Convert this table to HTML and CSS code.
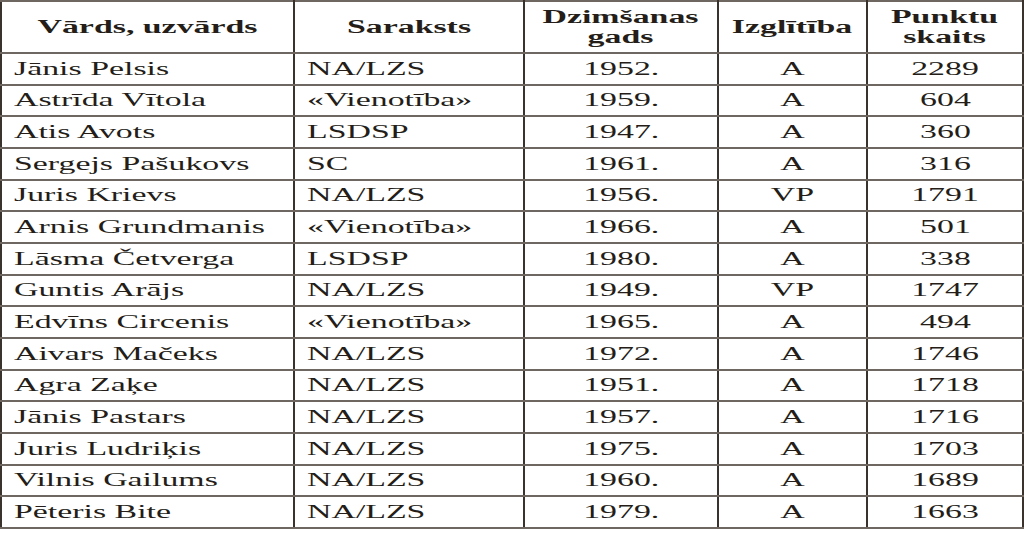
FILE: index.html
```html
<!DOCTYPE html>
<html lang="lv">
<head>
<meta charset="utf-8">
<title>Kandidāti</title>
<link rel="stylesheet" href="styles.css">
</head>
<body>
<table class="results">
  <colgroup>
    <col class="c-name"><col class="c-list"><col class="c-year"><col class="c-edu"><col class="c-pts">
  </colgroup>
  <thead>
    <tr>
      <th><span class="t">Vārds, uzvārds</span></th>
      <th><span class="t">Saraksts</span></th>
      <th><span class="t">Dzimšanas<br>gads</span></th>
      <th><span class="t">Izglītība</span></th>
      <th><span class="t">Punktu<br>skaits</span></th>
    </tr>
  </thead>
  <tbody>
    <tr><td class="l"><span class="t">Jānis Pelsis</span></td><td class="l"><span class="t">NA/LZS</span></td><td><span class="t">1952.</span></td><td><span class="t">A</span></td><td><span class="t">2289</span></td></tr>
    <tr><td class="l"><span class="t">Astrīda Vītola</span></td><td class="l"><span class="t">«Vienotība»</span></td><td><span class="t">1959.</span></td><td><span class="t">A</span></td><td><span class="t">604</span></td></tr>
    <tr><td class="l"><span class="t">Atis Avots</span></td><td class="l"><span class="t">LSDSP</span></td><td><span class="t">1947.</span></td><td><span class="t">A</span></td><td><span class="t">360</span></td></tr>
    <tr><td class="l"><span class="t">Sergejs Pašukovs</span></td><td class="l"><span class="t">SC</span></td><td><span class="t">1961.</span></td><td><span class="t">A</span></td><td><span class="t">316</span></td></tr>
    <tr><td class="l"><span class="t">Juris Krievs</span></td><td class="l"><span class="t">NA/LZS</span></td><td><span class="t">1956.</span></td><td><span class="t">VP</span></td><td><span class="t">1791</span></td></tr>
    <tr><td class="l"><span class="t">Arnis Grundmanis</span></td><td class="l"><span class="t">«Vienotība»</span></td><td><span class="t">1966.</span></td><td><span class="t">A</span></td><td><span class="t">501</span></td></tr>
    <tr><td class="l"><span class="t">Lāsma Četverga</span></td><td class="l"><span class="t">LSDSP</span></td><td><span class="t">1980.</span></td><td><span class="t">A</span></td><td><span class="t">338</span></td></tr>
    <tr><td class="l"><span class="t">Guntis Arājs</span></td><td class="l"><span class="t">NA/LZS</span></td><td><span class="t">1949.</span></td><td><span class="t">VP</span></td><td><span class="t">1747</span></td></tr>
    <tr><td class="l"><span class="t">Edvīns Circenis</span></td><td class="l"><span class="t">«Vienotība»</span></td><td><span class="t">1965.</span></td><td><span class="t">A</span></td><td><span class="t">494</span></td></tr>
    <tr><td class="l"><span class="t">Aivars Mačeks</span></td><td class="l"><span class="t">NA/LZS</span></td><td><span class="t">1972.</span></td><td><span class="t">A</span></td><td><span class="t">1746</span></td></tr>
    <tr><td class="l"><span class="t">Agra Zaķe</span></td><td class="l"><span class="t">NA/LZS</span></td><td><span class="t">1951.</span></td><td><span class="t">A</span></td><td><span class="t">1718</span></td></tr>
    <tr><td class="l"><span class="t">Jānis Pastars</span></td><td class="l"><span class="t">NA/LZS</span></td><td><span class="t">1957.</span></td><td><span class="t">A</span></td><td><span class="t">1716</span></td></tr>
    <tr><td class="l"><span class="t">Juris Ludriķis</span></td><td class="l"><span class="t">NA/LZS</span></td><td><span class="t">1975.</span></td><td><span class="t">A</span></td><td><span class="t">1703</span></td></tr>
    <tr><td class="l"><span class="t">Vilnis Gailums</span></td><td class="l"><span class="t">NA/LZS</span></td><td><span class="t">1960.</span></td><td><span class="t">A</span></td><td><span class="t">1689</span></td></tr>
    <tr><td class="l"><span class="t">Pēteris Bite</span></td><td class="l"><span class="t">NA/LZS</span></td><td><span class="t">1979.</span></td><td><span class="t">A</span></td><td><span class="t">1663</span></td></tr>
  </tbody>
</table>
</body>
</html>
```

FILE: styles.css
```css
html, body {
  margin: 0;
  padding: 0;
  background: #ffffff;
}

.results {
  border-collapse: collapse;
  table-layout: fixed;
  width: 1022px;
  font-family: "Liberation Serif", "Times New Roman", serif;
  font-size: 18px;
  color: #241d18;
  border: 2px solid #4a423c;
}

.c-name { width: 293px; }
.c-list { width: 230px; }
.c-year { width: 194px; }
.c-edu  { width: 149px; }
.c-pts  { width: 156px; }

.results th,
.results td {
  border-left: 2px solid #3a322c;
  border-right: 2px solid #3a322c;
  border-top: 2px solid #6e6660;
  border-bottom: 2px solid #6e6660;
  padding: 0;
  text-align: center;
  vertical-align: middle;
  white-space: nowrap;
  overflow: visible;
}

.results thead tr {
  height: 52px;
}

.results th {
  font-weight: bold;
  line-height: 20px;
}

.results tbody tr {
  height: 31.67px;
}

.results td {
  line-height: 20px;
}

.results td.l {
  text-align: left;
  padding-left: 12px;
}

.t {
  display: inline-block;
  transform: scaleX(1.88);
  transform-origin: center center;
}

.l .t {
  transform-origin: left center;
}
```
